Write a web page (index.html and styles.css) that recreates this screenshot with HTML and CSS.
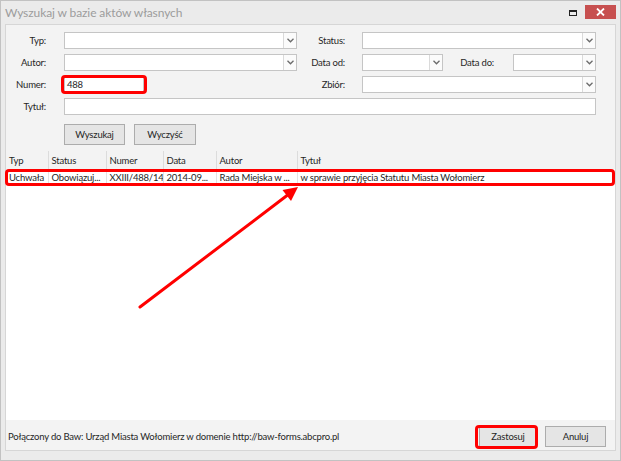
FILE: index.html
```html
<!DOCTYPE html>
<html lang="pl">
<head>
<meta charset="utf-8">
<title>Wyszukaj w bazie aktów własnych</title>
<link rel="stylesheet" href="styles.css">
</head>
<body>
<div class="window">
  <div class="titlebar">
    <span class="title">Wyszukaj w bazie aktów własnych</span>
    <span class="max-icon"></span>
    <span class="close-btn">
      <svg width="9" height="8" viewBox="0 0 9 8"><path d="M1 0.5 L8 7.5 M8 0.5 L1 7.5" stroke="#fff" stroke-width="1.8"/></svg>
    </span>
  </div>
  <div class="content">
    <div class="form">
      <label class="lbl">Typ:</label>
      <div class="combo"><span class="combo-text"></span><span class="combo-arrow"><svg width="7" height="5" viewBox="0 0 7 5"><path d="M0.5 0.8 L3.5 3.8 L6.5 0.8" fill="none" stroke="#6b6b6b" stroke-width="1.3"/></svg></span></div>
      <label class="lbl lbl-right">Status:</label>
      <div class="combo"><span class="combo-text"></span><span class="combo-arrow"><svg width="7" height="5" viewBox="0 0 7 5"><path d="M0.5 0.8 L3.5 3.8 L6.5 0.8" fill="none" stroke="#6b6b6b" stroke-width="1.3"/></svg></span></div>

      <label class="lbl">Autor:</label>
      <div class="combo"><span class="combo-text"></span><span class="combo-arrow"><svg width="7" height="5" viewBox="0 0 7 5"><path d="M0.5 0.8 L3.5 3.8 L6.5 0.8" fill="none" stroke="#6b6b6b" stroke-width="1.3"/></svg></span></div>
      <label class="lbl lbl-right">Data od:</label>
      <div class="dates">
        <div class="combo date-od"><span class="combo-text"></span><span class="combo-arrow"><svg width="7" height="5" viewBox="0 0 7 5"><path d="M0.5 0.8 L3.5 3.8 L6.5 0.8" fill="none" stroke="#6b6b6b" stroke-width="1.3"/></svg></span></div>
        <label class="lbl-do">Data do:</label>
        <div class="combo date-do"><span class="combo-text"></span><span class="combo-arrow"><svg width="7" height="5" viewBox="0 0 7 5"><path d="M0.5 0.8 L3.5 3.8 L6.5 0.8" fill="none" stroke="#6b6b6b" stroke-width="1.3"/></svg></span></div>
      </div>

      <label class="lbl">Numer:</label>
      <div class="numer-cell"><div class="textbox numer">488</div></div>
      <label class="lbl lbl-right">Zbiór:</label>
      <div class="combo"><span class="combo-text"></span><span class="combo-arrow"><svg width="7" height="5" viewBox="0 0 7 5"><path d="M0.5 0.8 L3.5 3.8 L6.5 0.8" fill="none" stroke="#6b6b6b" stroke-width="1.3"/></svg></span></div>

      <label class="lbl">Tytuł:</label>
      <div class="textbox tytul"></div>

      <div class="buttons">
        <button class="btn btn-search">Wyszukaj</button>
        <button class="btn btn-clear">Wyczyść</button>
      </div>
    </div>

    <div class="results">
      <table class="grid">
        <colgroup>
          <col class="c-typ"><col class="c-status"><col class="c-numer"><col class="c-data"><col class="c-autor"><col>
        </colgroup>
        <thead>
          <tr><th>Typ</th><th>Status</th><th>Numer</th><th>Data</th><th>Autor</th><th>Tytuł</th></tr>
        </thead>
        <tbody>
          <tr><td>Uchwała</td><td>Obowiązuj...</td><td>XXIII/488/14</td><td>2014-09...</td><td>Rada Miejska w ...</td><td>w sprawie przyjęcia Statutu Miasta Wołomierz</td></tr>
        </tbody>
      </table>
    </div>

    <div class="footer">
      <span class="status-text">Połączony do Baw: Urząd Miasta Wołomierz w domenie http://baw-forms.abcpro.pl</span>
      <button class="btn btn-apply">Zastosuj</button>
      <button class="btn btn-cancel">Anuluj</button>
    </div>
  </div>

  <div class="mark mark-numer"></div>
  <div class="mark mark-row"></div>
  <div class="mark mark-apply"></div>
  <svg class="arrow" width="180" height="140" viewBox="0 0 180 140">
    <line x1="10" y1="127" x2="157" y2="15.5" stroke="#f00" stroke-width="3" stroke-linecap="round"/>
    <polygon points="168,7 161,21 152.5,10" fill="#f00"/>
  </svg>
</div>
</body>
</html>
```

FILE: styles.css
```css
* {
  box-sizing: border-box;
}

html, body {
  margin: 0;
  padding: 0;
}

body {
  width: 621px;
  height: 461px;
  overflow: hidden;
  font-family: Lato, "Open Sans", sans-serif;
  font-size: 9.5px;
  letter-spacing: -0.2px;
  color: #262626;
  background: #ebebeb;
}

.window {
  position: relative;
  width: 621px;
  height: 461px;
  background: #ebebeb;
  border: 1px solid #c2c2c2;
  padding: 0 4px 9px 4px;
  display: flex;
  flex-direction: column;
}

/* title bar */
.titlebar {
  height: 23px;
  display: flex;
  align-items: flex-start;
  flex-shrink: 0;
}

.title {
  flex: 1;
  font-size: 12px;
  letter-spacing: -0.1px;
  color: #9c9c9c;
  padding-top: 4px;
}

.max-icon {
  width: 8px;
  height: 6px;
  margin-top: 9px;
  margin-right: 8px;
  border: 1px solid #222;
  border-top-width: 2px;
}

.close-btn {
  width: 31px;
  height: 14px;
  margin-top: 4px;
  background: #c75050;
  display: flex;
  align-items: center;
  justify-content: center;
}

/* main panel */
.content {
  flex: 1;
  border: 1px solid #d6d6d6;
  background: #f3f3f3;
  display: flex;
  flex-direction: column;
  min-height: 0;
}

.form {
  display: grid;
  grid-template-columns: 58px 233px 65px 234px;
  grid-template-rows: 17px 17px 17px 17px 25px;
  row-gap: 5px;
  padding-top: 7px;
  padding-bottom: 6px;
}

.lbl {
  text-align: right;
  padding-right: 18px;
  align-self: center;
  line-height: 17px;
}

.lbl-right {
  padding-right: 17px;
}

.combo {
  display: flex;
  height: 17px;
  background: #fff;
  border: 1px solid #c5c5c5;
}

.combo-text {
  flex: 1;
}

.combo-arrow {
  width: 13px;
  border-left: 1px solid #dadada;
  display: flex;
  align-items: center;
  justify-content: center;
  background: #fbfbfb;
}

.dates {
  display: flex;
  align-items: center;
}

.date-od {
  width: 81px;
}

.lbl-do {
  flex: 1;
  text-align: right;
  padding-right: 19px;
  line-height: 17px;
}

.date-do {
  width: 83px;
}

.textbox {
  height: 17px;
  background: #fff;
  border: 1px solid #c5c5c5;
  padding-left: 2px;
  line-height: 15px;
}

.numer {
  width: 80px;
}

.tytul {
  grid-column: 2 / 5;
}

.buttons {
  grid-column: 2 / 4;
  grid-row: 5;
  height: 21px;
  margin-top: 4px;
  display: flex;
  gap: 9px;
}

.btn {
  font-family: inherit;
  font-size: 9.5px;
  letter-spacing: -0.2px;
  color: #262626;
  height: 21px;
  padding: 0;
  background: #e5e5e5;
  border: 1px solid #acacac;
  border-radius: 0;
}

.btn-search { width: 61px; }
.btn-clear { width: 62px; }

/* results grid */
.results {
  flex: 1;
  background: #fff;
  min-height: 0;
}

.grid {
  width: 100%;
  border-collapse: collapse;
  table-layout: fixed;
}

.c-typ { width: 42px; }
.c-status { width: 58px; }
.c-numer { width: 57px; }
.c-data { width: 53px; }
.c-autor { width: 81px; }

.grid th {
  font-weight: normal;
  text-align: left;
  height: 18px;
  padding: 0 0 0 3px;
  background: #f3f3f3;
  border-right: 1px solid #dcdcdc;
  white-space: nowrap;
  overflow: hidden;
}

.grid th:last-child {
  border-right: none;
}

.grid td {
  height: 17px;
  padding: 0 0 0 3px;
  border-right: 1px solid #e3e3e3;
  white-space: nowrap;
  overflow: hidden;
}

.grid td:last-child {
  border-right: none;
}

/* footer */
.footer {
  height: 30px;
  flex-shrink: 0;
  display: flex;
  align-items: center;
  padding: 2px 9px 0 2px;
  gap: 8px;
}

.status-text {
  flex: 1;
}

.btn-apply { width: 58px; }
.btn-cancel { width: 61px; }

/* annotations */
.mark {
  position: absolute;
  border: 3px solid #f00;
  border-radius: 4px;
  pointer-events: none;
}

.mark-numer {
  left: 60px;
  top: 74px;
  width: 86px;
  height: 19px;
}

.mark-row {
  left: 4px;
  top: 168px;
  width: 610px;
  height: 17px;
}

.mark-apply {
  left: 474px;
  top: 424px;
  width: 63px;
  height: 24px;
}

.arrow {
  position: absolute;
  left: 129px;
  top: 179px;
  pointer-events: none;
}
```
